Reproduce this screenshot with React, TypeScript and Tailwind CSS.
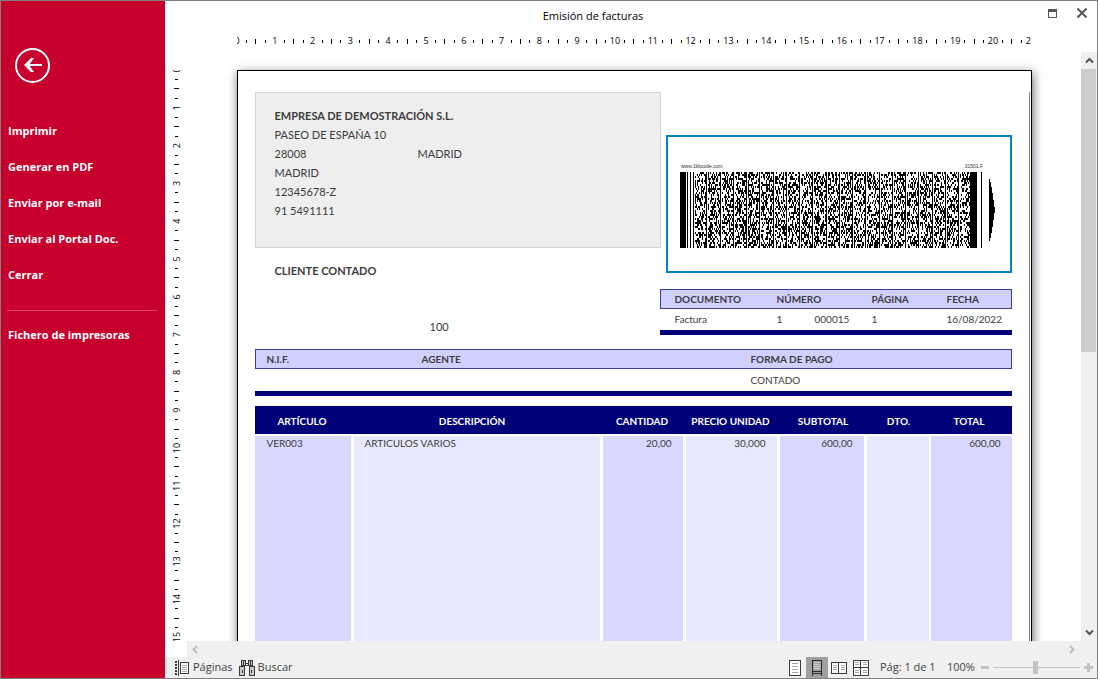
import type { ReactNode } from 'react';

const CM = 37.8;

const menuItems = ['Imprimir', 'Generar en PDF', 'Enviar por e-mail', 'Enviar al Portal Doc.', 'Cerrar'];

// Quarter marks between two numbers; the middle one is longer
const marks = [1, 2, 3];

function HorizontalRuler() {
  return (
    <svg width="795" height="21" className="shrink-0 overflow-hidden" aria-hidden="true">
      {Array.from({ length: 22 }, (_, n) => (
        <g key={n}>
          <text x={n * CM} y="13" textAnchor="middle" fontSize="9">{n}</text>
          {marks.map((m) => (
            <rect
              key={m}
              x={Math.floor((n + m / 4) * CM)}
              y={m === 2 ? 8 : 9}
              width="1"
              height={m === 2 ? 5 : 3}
            />
          ))}
        </g>
      ))}
    </svg>
  );
}

function VerticalRuler() {
  return (
    <svg width="22" height="1123" className="block overflow-hidden" aria-hidden="true">
      {Array.from({ length: 29 }, (_, n) => (
        <g key={n}>
          <text transform={`translate(15 ${n * CM}) rotate(-90)`} textAnchor="middle" fontSize="9">{n}</text>
          {marks.map((m) => (
            <rect
              key={m}
              x={m === 2 ? 9 : 10}
              y={Math.floor((n + m / 4) * CM)}
              width={m === 2 ? 5 : 3}
              height="1"
            />
          ))}
        </g>
      ))}
    </svg>
  );
}

// Fixed seed so the code is always drawn the same way
function buildModules() {
  let seed = 31501;
  let d = '';
  const bars = Array.from({ length: 21 }, (_, i) => 13 + Math.round(i * 13.25));
  for (let y = 0; y < 76; y += 2) {
    for (let x = 14; x < 290; x++) {
      seed ^= seed << 13;
      seed ^= seed >>> 17;
      seed ^= seed << 5;
      if (bars.includes(x - 1)) continue;
      if ((seed >>> 0) / 4294967296 < 0.47) d += `M${x} ${y}h1v2h-1z`;
    }
  }
  bars.forEach((x) => {
    d += `M${x} 0h1v76h-1z`;
  });
  return d;
}

const modules = buildModules();

function Barcode() {
  return (
    <svg width="318" height="88" viewBox="0 -12 318 88" role="img" aria-label="www.1kbcode.com" className="block">
      <text x="1" y="-4" fontSize="5" fill="#333" fontFamily="Liberation Sans, sans-serif">www.1kbcode.com</text>
      <text x="303" y="-4" fontSize="5" fill="#333" textAnchor="end" fontFamily="Liberation Sans, sans-serif">31501.F</text>
      <g shapeRendering="crispEdges">
        <path d="M0 0h6v76h-6z M7 0h1v76h-1z M10 0h1v76h-1z M290 0h7v76h-7z M301 0h1v76h-1z" />
        <path d={modules} />
        <path d="M309 7h1l2 10 2 15 1 5v2l-1 5-2 15-2 10h-1z" />
      </g>
    </svg>
  );
}

function BackIcon() {
  return (
    <svg width="36" height="36" viewBox="0 0 36 36" fill="none" stroke="#fff">
      <circle cx="17.5" cy="17.5" r="16.5" strokeWidth="2" />
      <path d="M10.500 17H27" strokeWidth="2" />
      <path d="M9 17l7-7h3l-5 7 5 7h-3z" fill="#fff" stroke="none" />
    </svg>
  );
}

function PagesIcon() {
  return (
    <svg width="15" height="16" viewBox="0 0 15 16" fill="none" stroke="#3b3b3b" shapeRendering="crispEdges">
      <path d="M1 1v15" strokeWidth="2" strokeDasharray="2 1" />
      <path d="M3.500 0v16" />
      <rect x="5.500" y="2.500" width="8" height="11" fill="#fff" />
      <path d="M7 5.500h5M7 7.500h5M7 9.500h5M7 11.500h5" stroke="#a8a8a8" />
    </svg>
  );
}

function BinocularsIcon() {
  return (
    <svg width="16" height="16" viewBox="0 0 16 16" fill="#c8c8c8" stroke="#3b3b3b" shapeRendering="crispEdges">
      <rect x="2.500" y="0.500" width="4" height="5" />
      <rect x="9.500" y="0.500" width="4" height="5" />
      <path d="M4.500 1v4M11.500 1v4M7 3.500h2M7 5.500h2" />
      <rect x="0.500" y="6.500" width="5" height="9" />
      <rect x="10.500" y="6.500" width="5" height="9" />
      <path d="M3.500 10v3M12.500 10v3" />
    </svg>
  );
}

function SinglePageIcon() {
  return (
    <svg width="12" height="16" viewBox="0 0 12 16" fill="none" stroke="#3b3b3b" shapeRendering="crispEdges">
      <rect x="0.500" y="0.500" width="11" height="15" fill="#fff" />
      <path d="M3 3.500h6M3 6.500h6M3 9.500h6M3 12.500h6" stroke="#a8a8a8" />
    </svg>
  );
}

function ContinuousIcon() {
  return (
    <svg width="10" height="16" viewBox="0 0 10 16" fill="none" stroke="#2b2b2b" shapeRendering="crispEdges">
      <path d="M0.500 0v16M9.500 0v16M0 0.500h10M0 11.500h10M0 13.500h10" />
      <path d="M2 2.500h6M2 4.500h6M2 6.500h6M2 8.500h6" stroke="#d0d0d0" />
    </svg>
  );
}

function FacingIcon() {
  return (
    <svg width="16" height="12" viewBox="0 0 16 12" fill="none" stroke="#3b3b3b" shapeRendering="crispEdges">
      <rect x="0.500" y="0.500" width="15" height="11" fill="#fff" />
      <path d="M7.500 0v12" />
      <path d="M2 3.500h4M2 5.500h4M2 7.500h4M10 3.500h4M10 5.500h4M10 7.500h4" stroke="#a8a8a8" />
    </svg>
  );
}

function FourPagesIcon() {
  return (
    <svg width="16" height="16" viewBox="0 0 16 16" fill="none" stroke="#3b3b3b" shapeRendering="crispEdges">
      <rect x="0.500" y="0.500" width="15" height="15" fill="#fff" />
      <path d="M7.500 0v16M0 7.500h16" />
      <path d="M2 2.500h4M2 4.500h4M10 2.500h4M10 4.500h4M2 10.500h4M2 12.500h4M10 10.500h4M10 12.500h4" stroke="#a8a8a8" />
    </svg>
  );
}

function Chevron({ d }: { d: string }) {
  return (
    <svg width="9" height="9" viewBox="0 0 9 9" fill="none" stroke="currentColor" strokeWidth="2">
      <path d={d} />
    </svg>
  );
}

function ViewButton({ label, active, children }: { label: string; active?: boolean; children: ReactNode }) {
  return (
    <button
      type="button"
      aria-label={label}
      aria-pressed={!!active}
      className={`flex h-full w-[22px] items-center justify-center ${active ? 'bg-[#a0a0a0]' : ''}`}
    >
      {children}
    </button>
  );
}

function Sidebar() {
  return (
    <aside className="flex w-[164px] shrink-0 flex-col bg-[#c8002d] pt-[47px] text-[11px] font-bold text-white">
      <button type="button" aria-label="Volver" className="ml-[14px] self-start">
        <BackIcon />
      </button>
      <nav className="mt-[29px] flex flex-col">
        {menuItems.map((item) => (
          <button key={item} type="button" className="h-9 px-[7px] text-left">{item}</button>
        ))}
        <hr className="ml-[6px] mr-2 mt-[17px] border-[#d84460]" />
        <button type="button" className="mt-[6px] h-9 px-[7px] text-left">Fichero de impresoras</button>
      </nav>
    </aside>
  );
}

function DocumentTable() {
  return (
    <div className="mt-4 border-b-[5px] border-[#000078] text-[10px]">
      <table className="w-full table-fixed border-separate border-spacing-0 text-left">
        <colgroup>
          <col className="w-[117px]" />
          <col className="w-[38px]" />
          <col className="w-[57px]" />
          <col className="w-[75px]" />
          <col />
        </colgroup>
        <thead>
          <tr className="h-5 bg-[#d0d0ff]">
            <th className="border-y border-l border-[#3c3c9c] pl-[14px]">DOCUMENTO</th>
            <th colSpan={2} className="border-y border-[#3c3c9c]">NÚMERO</th>
            <th className="border-y border-[#3c3c9c]">PÁGINA</th>
            <th className="border-y border-r border-[#3c3c9c]">FECHA</th>
          </tr>
        </thead>
        <tbody>
          <tr className="h-[21px]">
            <td className="pl-[15px]">Factura</td>
            <td>1</td>
            <td>000015</td>
            <td>1</td>
            <td>16/08/2022</td>
          </tr>
        </tbody>
      </table>
    </div>
  );
}

function PaymentTable() {
  return (
    <div className="mt-[13px] border-b-[5px] border-[#000078] text-[10px]">
      <table className="w-full table-fixed border-separate border-spacing-0 text-left">
        <colgroup>
          <col className="w-[167px]" />
          <col className="w-[329px]" />
          <col />
        </colgroup>
        <thead>
          <tr className="h-5 bg-[#d0d0ff]">
            <th className="border-y border-l border-[#3c3c9c] pl-[11px]">N.I.F.</th>
            <th className="border-y border-[#3c3c9c]">AGENTE</th>
            <th className="border-y border-r border-[#3c3c9c]">FORMA DE PAGO</th>
          </tr>
        </thead>
        <tbody>
          <tr className="h-[22px]">
            <td />
            <td />
            <td>CONTADO</td>
          </tr>
        </tbody>
      </table>
    </div>
  );
}

function LinesTable() {
  const cell = 'h-[600px] border-t-2 border-white align-top';
  return (
    <table className="mt-[10px] w-full table-fixed border-separate border-spacing-0 text-[10px] leading-[14px]">
      <colgroup>
        <col className="w-[99px]" />
        <col />
        <col className="w-[83px]" />
        <col className="w-[94px]" />
        <col className="w-[87px]" />
        <col className="w-[64px]" />
        <col className="w-[81px]" />
      </colgroup>
      <thead>
        <tr className="h-7 bg-[#000078] text-white">
          <th className="pt-[2px] pr-1">ARTÍCULO</th>
          <th className="pt-[2px] pr-3">DESCRIPCIÓN</th>
          <th className="pt-[2px] pr-1">CANTIDAD</th>
          <th className="pt-[2px] pr-1">PRECIO UNIDAD</th>
          <th className="pt-[2px]">SUBTOTAL</th>
          <th className="pt-[2px]">DTO.</th>
          <th className="pt-[2px] pr-1">TOTAL</th>
        </tr>
      </thead>
      <tbody>
        <tr>
          <td className={`${cell} border-r-[3px] bg-[#d8d8ff] pl-3`}>VER003</td>
          <td className={`${cell} border-r-[3px] bg-[#e8e8ff] pl-[11px]`}>ARTICULOS VARIOS</td>
          <td className={`${cell} border-r-[3px] bg-[#d8d8ff] pr-[11px] text-right`}>20,00</td>
          <td className={`${cell} border-r-[3px] bg-[#e8e8ff] pr-[11px] text-right`}>30,000</td>
          <td className={`${cell} border-r-[3px] bg-[#d8d8ff] pr-[11px] text-right`}>600,00</td>
          <td className={`${cell} border-r-2 bg-[#e8e8ff]`} />
          <td className={`${cell} bg-[#d8d8ff] pr-[11px] text-right`}>600,00</td>
        </tr>
      </tbody>
    </table>
  );
}

function Invoice() {
  return (
    <div className="mx-auto h-[1123px] w-[795px] border border-black bg-white pr-px pt-[21px] font-[Lato,sans-serif] text-[#3c3c3c] shadow-[1px_3px_10px_rgba(0,0,0,0.6)]">
      <div className="h-full border-r border-[#808080] px-[17px]">
        <div className="flex">
          <div className="w-[405px] text-[11px] leading-[19px]">
            <div className="-mr-px h-[156px] border border-[#d4d4d4] bg-[#eeeeee] pl-[19px] pt-[13px]">
              <p className="font-bold">EMPRESA DE DEMOSTRACIÓN S.L.</p>
              <p>PASEO DE ESPAÑA 10</p>
              <p className="flex">
                <span className="w-[143px]">28008</span>
                <span>MADRID</span>
              </p>
              <p>MADRID</p>
              <p>12345678-Z</p>
              <p>91 5491111</p>
            </div>
            <p className="mt-[13px] pl-5 font-bold">CLIENTE CONTADO</p>
            <p className="mt-[37px] pl-[175px]">100</p>
          </div>
          <div className="flex-1 pt-[43px]">
            <div className="ml-[6px] h-[138px] border-2 border-[#0080c8] pl-3 pt-[23px]">
              <Barcode />
            </div>
            <DocumentTable />
          </div>
        </div>
        <PaymentTable />
        <LinesTable />
      </div>
    </div>
  );
}

function StatusBar() {
  return (
    <footer className="flex h-[21px] shrink-0 items-center justify-between bg-[#f0f0f0] pl-[10px] pr-1 text-[11px] text-[#444]">
      <div className="flex items-center gap-[6px]">
        <button type="button" className="flex items-center gap-[3px]">
          <PagesIcon />
          Páginas
        </button>
        <button type="button" className="flex items-center gap-[3px]">
          <BinocularsIcon />
          Buscar
        </button>
      </div>
      <div className="flex h-full items-center">
        <ViewButton label="Una página"><SinglePageIcon /></ViewButton>
        <ViewButton label="Continuo" active><ContinuousIcon /></ViewButton>
        <ViewButton label="Dos páginas"><FacingIcon /></ViewButton>
        <ViewButton label="Cuatro páginas"><FourPagesIcon /></ViewButton>
        <span className="ml-2 w-[67px] whitespace-nowrap">Pág: 1 de 1</span>
        <label htmlFor="zoom" className="w-[34px]">100%</label>
        <button type="button" aria-label="Reducir" className="text-[#c3c3c3]">
          <svg width="8" height="9" className="block"><path d="M0 3h8v3H0z" fill="currentColor" /></svg>
        </button>
        <input
          id="zoom"
          type="range"
          min="0"
          max="200"
          defaultValue="98"
          className="mx-1 h-[14px] w-[87px] appearance-none bg-transparent [&::-webkit-slider-runnable-track]:h-px [&::-webkit-slider-runnable-track]:bg-[#c3c3c3] [&::-webkit-slider-thumb]:-mt-[6px] [&::-webkit-slider-thumb]:h-[13px] [&::-webkit-slider-thumb]:w-[5px] [&::-webkit-slider-thumb]:appearance-none [&::-webkit-slider-thumb]:bg-[#c3c3c3]"
        />
        <button type="button" aria-label="Ampliar" className="text-[#c3c3c3]">
          <svg width="9" height="9" className="block"><path d="M0 3h3V0h3v3h3v3H6v3H3V6H0z" fill="currentColor" /></svg>
        </button>
      </div>
    </footer>
  );
}

export default function App() {
  return (
    <div className="flex h-screen overflow-hidden border border-[#808080] bg-white font-['Open_Sans',sans-serif] text-black">
      <Sidebar />
      <main className="flex min-w-0 flex-1 flex-col">
        <header className="flex h-[30px] shrink-0 items-center">
          <h1 className="flex-1 text-center text-[11px]">Emisión de facturas</h1>
          <div className="flex w-[76px] items-center justify-end gap-5 pb-[6px] pr-[10px] text-[#555]">
            <button type="button" aria-label="Maximizar">
              <svg width="9" height="9" className="block" fill="currentColor" shapeRendering="crispEdges">
                <path fillRule="evenodd" d="M0 0h9v9H0zM1 3v5h7V3z" />
              </svg>
            </button>
            <button type="button" aria-label="Cerrar ventana">
              <svg width="10" height="10" className="block" stroke="currentColor" strokeWidth="2">
                <path d="M0.500 0.500l9 9M9.500 0.500l-9 9" />
              </svg>
            </button>
          </div>
        </header>

        <div className="flex shrink-0 justify-center overflow-hidden pl-[22px] pr-4">
          <HorizontalRuler />
        </div>

        <div className="flex min-h-0 flex-1">
          <div className="w-[22px] shrink-0 overflow-hidden pt-[18px]">
            <VerticalRuler />
          </div>
          <div className="min-w-0 flex-1 overflow-hidden pt-[18px]">
            <Invoice />
          </div>
          <div className="flex w-4 shrink-0 flex-col bg-[#f0f0f0] text-[#555]">
            <button type="button" aria-label="Subir" className="flex h-[17px] shrink-0 items-center justify-center">
              <Chevron d="M1 6.500l3.500-3.500 3.500 3.500" />
            </button>
            <div className="flex-1 pr-px">
              <div className="h-[51%] bg-[#cdcdcd]" />
            </div>
            <button type="button" aria-label="Bajar" className="flex h-[17px] shrink-0 items-center justify-center">
              <Chevron d="M1 2.500l3.500 3.500 3.500-3.500" />
            </button>
          </div>
        </div>

        <div className="ml-[22px] flex h-4 shrink-0 items-center justify-between bg-[#f0f0f0] pl-1 pr-[21px] text-[#bfbfbf]">
          <button type="button" aria-label="Izquierda"><Chevron d="M6 1l-3.500 3.500 3.500 3.500" /></button>
          <button type="button" aria-label="Derecha"><Chevron d="M3 1l3.500 3.500-3.500 3.500" /></button>
        </div>

        <StatusBar />
      </main>
    </div>
  );
}
